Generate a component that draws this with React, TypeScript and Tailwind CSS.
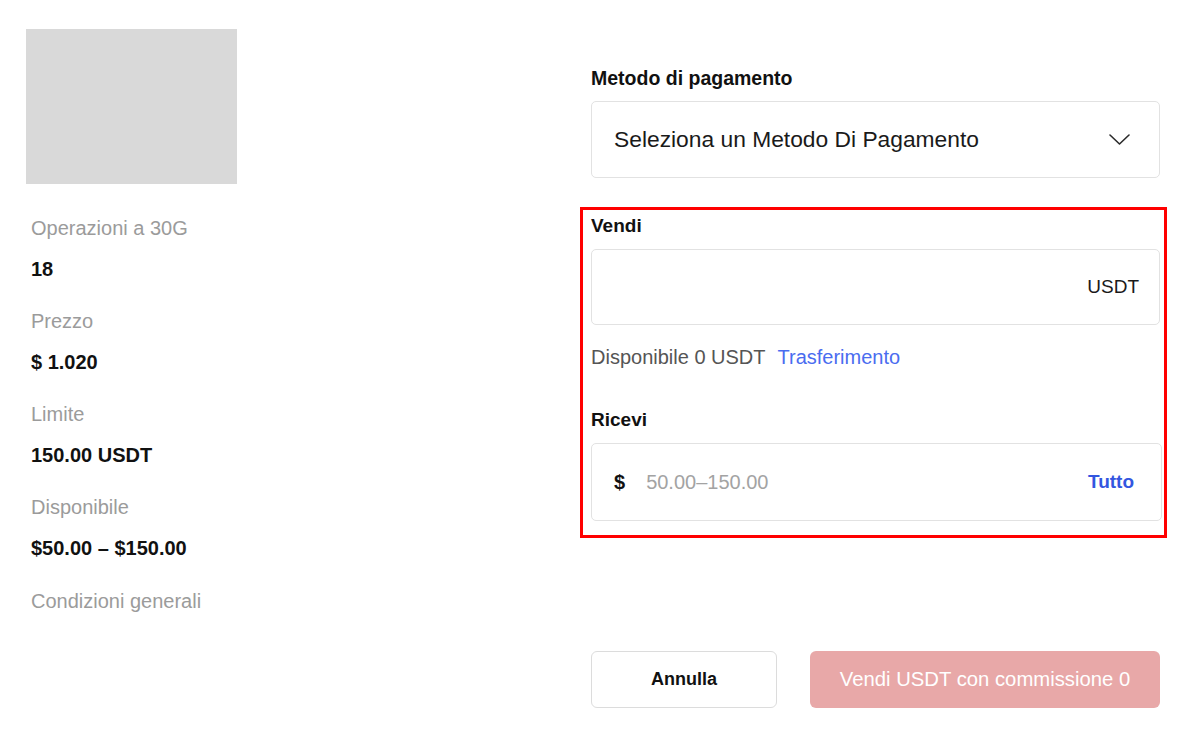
import React from "react";

const stats = [
  { label: "Operazioni a 30G", value: "18" },
  { label: "Prezzo", value: "$ 1.020" },
  { label: "Limite", value: "150.00 USDT" },
  { label: "Disponibile", value: "$50.00 – $150.00" },
];

function Chevron() {
  return (
    <svg width="21" height="11" viewBox="0 0 21 11" fill="none" aria-hidden>
      <path d="M1 1L10.5 10L20 1" stroke="#2b2b2b" strokeWidth="1.6" strokeLinecap="round" strokeLinejoin="round" />
    </svg>
  );
}

export default function App() {
  return (
    <div
      className="flex min-h-[744px] w-[1178px] bg-white pl-[26px] text-[#111]"
      style={{ fontFamily: '"Liberation Sans", Arial, sans-serif' }}
    >
      {/* Left: ad summary */}
      <div className="flex w-[211px] flex-col pt-[29px]">
        <div className="h-[155px] w-[211px] bg-[#d9d9d9]" />
        <div className="mt-[4px] flex flex-col pl-[5px]">
          {stats.map((s) => (
            <div key={s.label} className="mt-[28px]">
              <div className="text-[20px] leading-6 text-[#9b9b9b]">{s.label}</div>
              <div className="mt-[17px] text-[20px] font-semibold leading-6 text-[#111]">{s.value}</div>
            </div>
          ))}
          <div className="mt-[29px] text-[20px] leading-6 text-[#9b9b9b]">Condizioni generali</div>
        </div>
      </div>

      {/* Right: order form */}
      <div className="ml-[354px] flex w-[569px] flex-col pt-[66px]">
        <div className="text-[19.5px] font-bold leading-6">Metodo di pagamento</div>
        <button className="mt-[11px] flex h-[77px] w-full items-center justify-between rounded-[5px] border border-[#e2e2e2] pl-[22px] pr-[29px] text-left">
          <span className="text-[22.8px] text-[#1a1a1a]">Seleziona un Metodo Di Pagamento</span>
          <Chevron />
        </button>

        {/* Highlighted amount section */}
        <div className="-ml-[11px] -mr-[7px] mt-[29px] border-[3px] border-[#ff0000] pb-[14px] pl-[8px] pr-[2px] pt-[4px]">
          <div className="text-[19px] font-bold leading-6">Vendi</div>
          <div className="mt-[11px] flex h-[76px] w-[569px] items-center justify-end rounded-[5px] border border-[#e2e2e2] pr-[20px]">
            <span className="text-[19px] text-[#1a1a1a]">USDT</span>
          </div>
          <div className="mt-[20px] flex items-center gap-[12px] text-[20px] leading-6">
            <span className="text-[#555]">Disponibile 0 USDT</span>
            <span className="text-[#4a6cf0]">Trasferimento</span>
          </div>
          <div className="mt-[39px] text-[19px] font-bold leading-6">Ricevi</div>
          <div className="mt-[11px] flex h-[78px] w-full items-center rounded-[5px] border border-[#e2e2e2] pl-[22px] pr-[27px]">
            <span className="text-[20px] font-bold">$</span>
            <span className="ml-[21px] text-[20px] text-[#a3a3a3]">50.00–150.00</span>
            <span className="ml-auto text-[19px] font-bold text-[#3356e0]">Tutto</span>
          </div>
        </div>

        {/* Actions */}
        <div className="mt-[113px] flex gap-[33px]">
          <button className="h-[57px] w-[186px] rounded-[6px] border border-[#dcdcdc] bg-white text-[18px] font-bold text-[#111]">
            Annulla
          </button>
          <button className="h-[57px] w-[350px] rounded-[6px] bg-[#e8a8a8] text-[20.3px] text-white">
            Vendi USDT con commissione 0
          </button>
        </div>
      </div>
    </div>
  );
}
